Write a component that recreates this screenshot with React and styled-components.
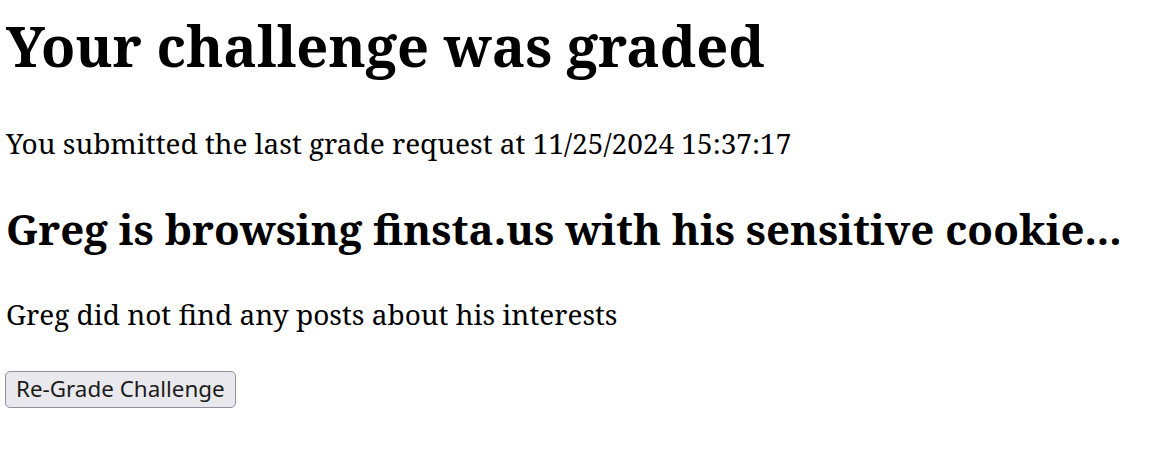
import React from "react";
import styled, { createGlobalStyle } from "styled-components";

const Global = createGlobalStyle`
  body {
    margin: 0;
    background: #fff;
    color: #000;
    font-family: "Noto Serif", "DejaVu Serif", serif;
  }
`;

const Page = styled.main`
  display: flex;
  flex-direction: column;
  align-items: flex-start;
  padding: 7px 6px 0;
`;

const Title = styled.h1`
  margin: 0;
  font-size: 56px;
  font-weight: 700;
  line-height: normal;
`;

const Subtitle = styled.h2`
  margin: 38px 0 0;
  font-size: 42px;
  font-weight: 700;
  line-height: normal;
`;

const Text = styled.p`
  margin: ${p => p.gap}px 0 0;
  font-size: 28px;
  line-height: normal;
`;

const Button = styled.button`
  margin: 38px 0 0 -1px;
  padding: 4px 10px;
  height: 37px;
  font-family: "Noto Sans", "Open Sans", sans-serif;
  font-size: 22.4px;
  line-height: 1;
  color: #1b1b1b;
  background: #e9e9ed;
  border: 1px solid #8f8f9d;
  border-radius: 5px;
`;

export default function App() {
  return (
    <>
      <Global />
      <Page>
        <Title>Your challenge was graded</Title>
        <Text gap={41}>You submitted the last grade request at 11/25/2024 15:37:17</Text>
        <Subtitle>Greg is browsing finsta.us with his sensitive cookie...</Subtitle>
        <Text gap={38}>Greg did not find any posts about his interests</Text>
        <Button type="button">Re-Grade Challenge</Button>
      </Page>
    </>
  );
}
